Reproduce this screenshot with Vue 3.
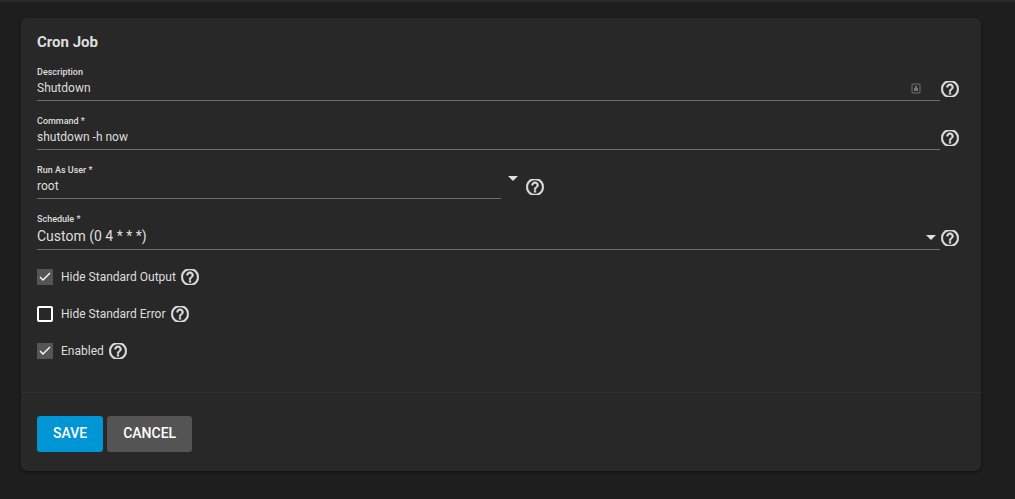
<script setup>
import { reactive, h } from 'vue'

const job = reactive({
  description: 'Shutdown',
  command: 'shutdown -h now',
  user: 'root',
  schedule: 'custom',
})

const options = reactive([
  { id: 'hide-output', label: 'Hide Standard Output', checked: true },
  { id: 'hide-error', label: 'Hide Standard Error', checked: false },
  { id: 'enabled', label: 'Enabled', checked: true },
])

const HelpIcon = () =>
  h('svg', { viewBox: '2 3 20 18', width: 18, height: 16, 'aria-hidden': 'true' }, [
    h('path', {
      fill: 'currentColor',
      stroke: 'currentColor',
      'stroke-width': '0.5',
      d: 'M11 18h2v-2h-2v2zm1-16C6.48 2 2 6.48 2 12s4.48 10 10 10 10-4.48 10-10S17.52 2 12 2zm0 18c-4.41 0-8-3.59-8-8s3.59-8 8-8 8 3.59 8 8-3.59 8-8 8zm0-14c-2.21 0-4 1.79-4 4h2c0-1.1.9-2 2-2s2 .9 2 2c0 2-3 1.75-3 5h2c0-2.25 3-2.5 3-5 0-2.21-1.79-4-4-4z',
    }),
  ])
</script>

<template>
  <div class="page">
    <form class="card" @submit.prevent>
      <div class="body">
        <h1>Cron Job</h1>

        <div class="row">
          <div class="field">
            <label for="description">Description</label>
            <input id="description" v-model="job.description" type="text" />
            <svg class="badge" width="10" height="12" viewBox="0 0 10 12" aria-hidden="true">
              <rect x="1" y="1" width="8" height="9" rx="1" fill="none" stroke="#747474" />
              <path d="M4 3h2v2h1v3H3V5h1z" fill="#747474" />
            </svg>
          </div>
          <button type="button" class="help" aria-label="Description help"><HelpIcon /></button>
        </div>

        <div class="row">
          <div class="field">
            <label for="command">Command *</label>
            <input id="command" v-model="job.command" type="text" />
          </div>
          <button type="button" class="help" aria-label="Command help"><HelpIcon /></button>
        </div>

        <div class="row half">
          <div class="field">
            <label for="user">Run As User *</label>
            <select id="user" v-model="job.user">
              <option value="root">root</option>
            </select>
          </div>
          <svg class="caret" width="10" height="5" viewBox="0 0 10 5" aria-hidden="true">
            <path d="M0 0h10L5 5z" fill="currentColor" />
          </svg>
          <button type="button" class="help" aria-label="User help"><HelpIcon /></button>
        </div>

        <div class="row schedule">
          <div class="field">
            <label for="schedule">Schedule *</label>
            <select id="schedule" v-model="job.schedule">
              <option value="custom">Custom (0 4 * * *)</option>
            </select>
            <svg class="caret inside" width="10" height="5" viewBox="0 0 10 5" aria-hidden="true">
              <path d="M0 0h10L5 5z" fill="currentColor" />
            </svg>
          </div>
          <button type="button" class="help" aria-label="Schedule help"><HelpIcon /></button>
        </div>

        <div class="checks">
          <div v-for="o in options" :key="o.id" class="check">
            <span class="box">
              <input :id="o.id" v-model="o.checked" type="checkbox" />
              <svg v-if="o.checked" width="16" height="16" viewBox="0 0 16 16" aria-hidden="true">
                <path d="M3 8l3 3 7-7" fill="none" stroke="#fff" stroke-width="1.4" />
              </svg>
            </span>
            <label :for="o.id">{{ o.label }}</label>
            <button type="button" class="help" :aria-label="o.label + ' help'"><HelpIcon /></button>
          </div>
        </div>
      </div>

      <div class="actions">
        <button type="submit" class="btn primary">SAVE</button>
        <button type="button" class="btn">CANCEL</button>
      </div>
    </form>
  </div>
</template>

<style>
body {
  margin: 0;
  background: #1e1e1e;
}
</style>

<style scoped>
.page {
  box-sizing: border-box;
  min-height: 100vh;
  padding: 16px 34px 28px 21px;
  border-top: 2px solid #2a2a2a;
  background: #1e1e1e;
  color: #dedede;
  font-family: Roboto, "Liberation Sans", sans-serif;
}
.card {
  border-radius: 6px;
  background: #282828;
  box-shadow: 0 1px 3px rgba(0, 0, 0, 0.5);
}
.body {
  padding: 14px 22px 33px 16px;
}
h1 {
  margin: 0 0 14px;
  font-size: 15px;
  line-height: 20px;
  font-weight: 700;
}
.row {
  display: flex;
  align-items: flex-end;
  gap: 1px;
  margin-bottom: 14px;
}
.field {
  position: relative;
  flex: 1;
  display: flex;
  flex-direction: column;
  border-bottom: 1px solid #6e6e6e;
}
.field label {
  font-size: 9px;
  line-height: 12px;
  font-weight: 500;
}
input[type="text"],
select {
  appearance: none;
  width: 100%;
  height: 20px;
  margin: 0 0 2px;
  padding: 0;
  border: 0;
  outline: 0;
  background: transparent;
  color: inherit;
  font-family: inherit;
  font-size: 12px;
  line-height: 20px;
}
.half .field {
  flex: 0 0 calc(50% + 3px);
}
.half .caret {
  margin: 0 7px 18px 6px;
}
.schedule .field select {
  height: 23px;
  margin: 0 0 1px;
  font-size: 14px;
  line-height: 23px;
}
.caret {
  display: block;
}
.inside {
  position: absolute;
  right: 4px;
  bottom: 9px;
  pointer-events: none;
}
.badge {
  position: absolute;
  right: 19px;
  bottom: 5px;
}
.help {
  display: block;
  flex: none;
  padding: 0;
  border: 0;
  background: none;
  color: inherit;
  cursor: pointer;
}
.help svg {
  display: block;
}
.row .help {
  margin-bottom: 4px;
}
.checks {
  display: flex;
  flex-direction: column;
  gap: 21px;
  padding-top: 5px;
}
.check {
  display: flex;
  align-items: center;
  height: 16px;
}
.check label {
  margin: 0 5px 0 8px;
  font-size: 12px;
  line-height: 16px;
}
.box {
  position: relative;
  width: 16px;
  height: 16px;
}
.box input {
  appearance: none;
  display: block;
  box-sizing: border-box;
  width: 16px;
  height: 16px;
  margin: 0;
  border: 2px solid #fff;
  border-radius: 2px;
}
.box input:checked {
  border: 0;
  border-radius: 0;
  background: #555;
}
.box svg {
  position: absolute;
  inset: 0;
  pointer-events: none;
}
.actions {
  display: flex;
  gap: 4px;
  padding: 23px 16px 19px;
  border-top: 1px solid #323232;
}
.btn {
  height: 36px;
  padding: 0 16px 2px;
  border: 0;
  border-radius: 3px;
  background: #545454;
  color: #fff;
  font-family: inherit;
  font-size: 14px;
  font-weight: 500;
}
.primary {
  background: #0095d5;
}
</style>
